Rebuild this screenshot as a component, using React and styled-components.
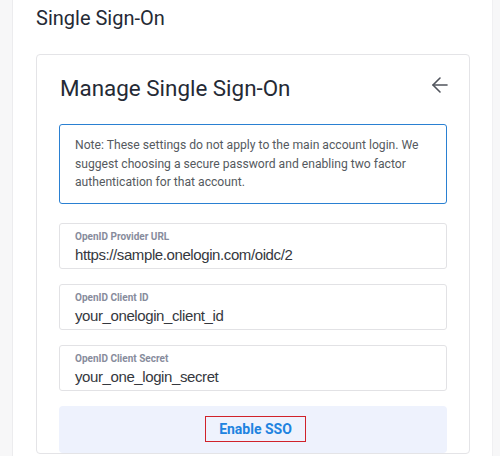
import React from "react";
import styled, { createGlobalStyle } from "styled-components";
import { ArrowLeft } from "lucide-react";

const Global = createGlobalStyle`
  html, body { margin: 0; padding: 0; background: #f7f7f8; }
  body { font-family: Roboto, "Liberation Sans", sans-serif; }
  * { box-sizing: border-box; }
`;

const Page = styled.div`
  display: flex;
  height: 456px;
  overflow: hidden;
`;

const Panel = styled.section`
  margin-left: 12px;
  width: 481px;
  background: #ffffff;
  border-left: 1px solid #ececee;
  border-right: 1px solid #f0f0f2;
  padding: 6px 22px 0 23px;
  display: flex;
  flex-direction: column;
`;

const PageTitle = styled.h1`
  margin: 0;
  font-size: 20px;
  line-height: 24px;
  font-weight: 400;
  color: #252a35;
`;

const Card = styled.div`
  margin-top: 24px;
  border: 1px solid #e4e4e7;
  border-radius: 4px;
  padding: 20px 22px 0 22px;
  display: flex;
  flex-direction: column;
`;

const CardHeader = styled.div`
  display: flex;
  align-items: center;
  justify-content: space-between;
  height: 26px;
`;

const CardTitle = styled.h2`
  margin: 0 0 0 1px;
  font-size: 22.4px;
  line-height: 26px;
  font-weight: 400;
  color: #252a35;
`;

const BackButton = styled.button`
  border: none;
  background: none;
  padding: 0;
  margin: 0 -5px 7px 0;
  display: flex;
  color: #50545c;
  cursor: pointer;
`;

const Note = styled.div`
  margin-top: 23px;
  border: 1px solid #2a80d2;
  border-radius: 3px;
  padding: 11px 15px;
  font-size: 12.15px;
  line-height: 18.5px;
  color: #555a60;
`;

const Fields = styled.div`
  margin-top: 19px;
  display: flex;
  flex-direction: column;
  gap: 15px;
`;

const Field = styled.label`
  display: flex;
  flex-direction: column;
  border: 1px solid #e2e2e5;
  border-radius: 3px;
  padding: 7px 15px 0 15px;
  height: 46px;
`;

const FieldLabel = styled.span`
  font-size: 10px;
  line-height: 12px;
  font-weight: 700;
  color: #878c9c;
`;

const FieldValue = styled.span`
  margin-top: 3px;
  font-family: "Liberation Sans", Arial, sans-serif;
  font-size: 15px;
  line-height: 17px;
  letter-spacing: -0.4px;
  color: #35383e;
`;

const ActionBar = styled.div`
  margin-top: 15px;
  background: #eef2fd;
  border-radius: 4px;
  height: 47px;
  display: flex;
  align-items: center;
  justify-content: center;
  padding-left: 5px;
`;

const EnableButton = styled.button`
  border: 1px solid #d0222a;
  background: transparent;
  width: 101px;
  height: 26px;
  padding: 0;
  font-family: Roboto, "Liberation Sans", sans-serif;
  font-size: 14px;
  font-weight: 700;
  color: #2083e0;
  cursor: pointer;
`;

const fields = [
  { label: "OpenID Provider URL", value: "https://sample.onelogin.com/oidc/2" },
  { label: "OpenID Client ID", value: "your_onelogin_client_id" },
  { label: "OpenID Client Secret", value: "your_one_login_secret" },
];

export default function App() {
  return (
    <>
      <Global />
      <Page>
        <Panel>
          <PageTitle>Single Sign-On</PageTitle>
          <Card>
            <CardHeader>
              <CardTitle>Manage Single Sign-On</CardTitle>
              <BackButton aria-label="Back">
                <ArrowLeft size={24} strokeWidth={1.6} />
              </BackButton>
            </CardHeader>
            <Note>
              Note: These settings do not apply to the main account login. We
              suggest choosing a secure password and enabling two factor
              authentication for that account.
            </Note>
            <Fields>
              {fields.map((f) => (
                <Field key={f.label}>
                  <FieldLabel>{f.label}</FieldLabel>
                  <FieldValue>{f.value}</FieldValue>
                </Field>
              ))}
            </Fields>
            <ActionBar>
              <EnableButton>Enable SSO</EnableButton>
            </ActionBar>
          </Card>
        </Panel>
      </Page>
    </>
  );
}
